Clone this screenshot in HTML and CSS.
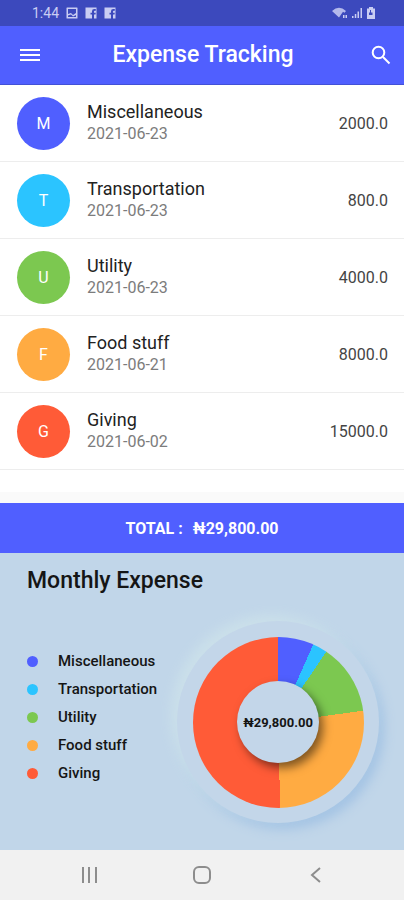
FILE: index.html
```html
<!DOCTYPE html>
<html lang="en">
<head>
<meta charset="utf-8">
<meta name="viewport" content="width=device-width, initial-scale=1">
<title>Expense Tracking</title>
<link rel="stylesheet" href="styles.css">
</head>
<body>
<div class="app">
  <div class="status">
    <span class="clock">1:44</span>
    <svg class="mini" viewBox="0 0 12 12"><path fill-rule="evenodd" d="M1 .5h10q.5 0 .5.5v10q0 .5-.5.5H1q-.5 0-.5-.5V1Q.5.5 1 .5zM2 2v5l3-1 2 2 3-2V2zM2 8.500v1.500h8V8l-3 1.500-2-2z"/></svg>
    <svg class="mini" viewBox="0 0 12 12"><path fill-rule="evenodd" d="M.5.5h11v11H9V7.500h1.500l.3-1.700H9V4.500q0-.8.8-.8h1V2H9.300Q7 2 7 4.300v1.500H5.500v1.700H7v4H.5z"/></svg>
    <svg class="mini" viewBox="0 0 12 12"><path fill-rule="evenodd" d="M.5.5h11v11H9V7.500h1.500l.3-1.700H9V4.500q0-.8.8-.8h1V2H9.300Q7 2 7 4.300v1.500H5.500v1.700H7v4H.5z"/></svg>
    <svg class="signals" viewBox="0 0 44 14"><path d="M0 5q7-6.500 14 0l-1.500 1.800-1.500-1-4 5.700z" opacity=".85"/><path d="M11 9h1.500v3H11zM13.500 9H15v3h-1.500z"/><path d="M20 10h1.500v2H20zM22.800 8h1.500v4h-1.500zM25.500 5.500H27V12h-1.500zM28.500 2H30v10h-1.500z"/><path fill-rule="evenodd" d="M37 1h4v1.500h2V13h-8V2.500h2zM38 4v2.500h-1V9h3.500V6.500H39V4z"/></svg>
  </div>
  <header class="bar">
    <button class="icon-button" aria-label="Menu"><svg width="20" height="20" viewBox="0 0 20 20"><path d="M0 5h20M0 10h20M0 15h20"/></svg></button>
    <h1>Expense Tracking</h1>
    <button class="icon-button" aria-label="Search"><svg width="20" height="20" viewBox="0 0 20 20"><circle cx="7.500" cy="7.500" r="5.800"/><path d="M12 12l6.500 6.500"/></svg></button>
  </header>
  <main>
    <ul class="expenses">
      <li><span class="avatar misc">M</span><div class="info"><h2>Miscellaneous</h2><time>2021-06-23</time></div><span class="amount">2000.0</span></li>
      <li><span class="avatar transport">T</span><div class="info"><h2>Transportation</h2><time>2021-06-23</time></div><span class="amount">800.0</span></li>
      <li><span class="avatar utility">U</span><div class="info"><h2>Utility</h2><time>2021-06-23</time></div><span class="amount">4000.0</span></li>
      <li><span class="avatar food">F</span><div class="info"><h2>Food stuff</h2><time>2021-06-21</time></div><span class="amount">8000.0</span></li>
      <li><span class="avatar giving">G</span><div class="info"><h2>Giving</h2><time>2021-06-02</time></div><span class="amount">15000.0</span></li>
    </ul>
    <div class="total"><span>TOTAL :</span><span>₦29,800.00</span></div>
    <section class="monthly">
      <h2>Monthly Expense</h2>
      <div class="summary">
        <ul class="legend">
          <li><i class="dot misc"></i>Miscellaneous</li>
          <li><i class="dot transport"></i>Transportation</li>
          <li><i class="dot utility"></i>Utility</li>
          <li><i class="dot food"></i>Food stuff</li>
          <li><i class="dot giving"></i>Giving</li>
        </ul>
        <div class="dish"><div class="pie"><div class="hub">₦29,800.00</div></div></div>
      </div>
    </section>
  </main>
  <nav class="system">
    <button aria-label="Recent apps"><svg width="20" height="20" viewBox="0 0 20 20"><path d="M4 2v16M10 2v16M17 2v16"/></svg></button>
    <button aria-label="Home"><svg width="20" height="20" viewBox="0 0 20 20"><rect x="2" y="2" width="16" height="16" rx="5"/></svg></button>
    <button aria-label="Back"><svg width="20" height="20" viewBox="0 0 20 20"><path d="M15 3l-8 7 8 7"/></svg></button>
  </nav>
</div>
</body>
</html>
```
FILE: styles.css
```css
* { box-sizing: border-box; }
body { margin: 0; font-family: Roboto, sans-serif; color: #151515; }
h1, h2, ul { margin: 0; padding: 0; }
ul { list-style: none; }
button { border: 0; padding: 0; background: none; color: inherit; display: grid; place-items: center; }
svg { display: block; }

.app { min-height: 100vh; display: flex; flex-direction: column; background: #fff; }
.status { height: 26px; padding: 0 28px 0 32px; display: flex; align-items: center; gap: 7px; background: #3c49bd; color: #c9cdf3; fill: currentColor; }
.clock { font-size: 14px; line-height: 26px; }
.mini { width: 12px; height: 12px; }
.signals { width: 44px; height: 14px; margin-left: auto; }

.bar { height: 59px; padding: 0 13px 0 20px; display: grid; grid-template-columns: 20px 1fr 20px; align-items: center; background: #505fff; border-bottom: 1px solid #4351d6; color: #fff; }
.bar h1 { padding-right: 5px; text-align: center; font-size: 23px; line-height: 28px; font-weight: 500; }
.icon-button svg { fill: none; stroke: currentColor; stroke-width: 2; }

main { flex: 1; display: flex; flex-direction: column; }
.expenses { flex: 1; border-bottom: 11px solid #fafafa; }
.expenses li { height: 77px; padding: 0 16px 0 17px; display: flex; align-items: center; gap: 17px; border-bottom: 1px solid #ededed; }
.avatar { width: 53px; height: 53px; border-radius: 50%; display: grid; place-items: center; color: #fff; font-size: 16px; }
.info { flex: 1; }
.info h2 { font-size: 18px; line-height: 22px; font-weight: 400; color: #222; }
.info time { display: block; font-size: 16px; line-height: 22px; color: #7c7c7c; }
.amount { font-size: 16px; color: #444; }
.misc { background: #505fff; }
.transport { background: #2bc4ff; }
.utility { background: #7cc850; }
.food { background: #ffab42; }
.giving { background: #ff5b37; }

.total { height: 50px; display: flex; align-items: center; justify-content: center; gap: 10px; background: #505fff; color: #fff; font-size: 16px; font-weight: 700; }

.monthly { padding: 14px 25px 27px 27px; background: #c1d6e9; overflow: hidden; }
.monthly h2 { font-size: 23px; line-height: 28px; font-weight: 500; }
.summary { margin-top: 26px; display: flex; align-items: center; justify-content: space-between; }
.legend { display: grid; gap: 8px; margin-bottom: 10px; }
.legend li { display: flex; align-items: center; gap: 20px; font-size: 15px; line-height: 20px; font-weight: 500; white-space: nowrap; }
.dot { width: 11px; height: 11px; border-radius: 50%; }
.dish { width: 202px; height: 202px; flex: none; margin-left: -20px; border-radius: 50%; display: grid; place-items: center; background: #c3d6e9; box-shadow: -6px -6px 12px #cbe0ea, 5px 6px 12px #a3c3e4; }
.pie { width: 171px; height: 171px; border-radius: 50%; display: grid; place-items: center; background: conic-gradient(#505fff 0 24deg, #2bc4ff 24deg 34deg, #7cc850 34deg 82deg, #ffab42 82deg 179deg, #ff5b37 179deg); }
.hub { width: 82px; height: 82px; border-radius: 50%; display: grid; place-items: center; background: #c3d6e9; box-shadow: 4px 5px 10px rgba(0, 0, 0, .5); font-size: 13px; font-weight: 700; }

.system { height: 50px; padding: 0 32px; display: grid; grid-template-columns: repeat(3, 1fr); background: #f1f1f1; color: #8d8d8d; }
.system svg { fill: none; stroke: currentColor; stroke-width: 2; }
```
